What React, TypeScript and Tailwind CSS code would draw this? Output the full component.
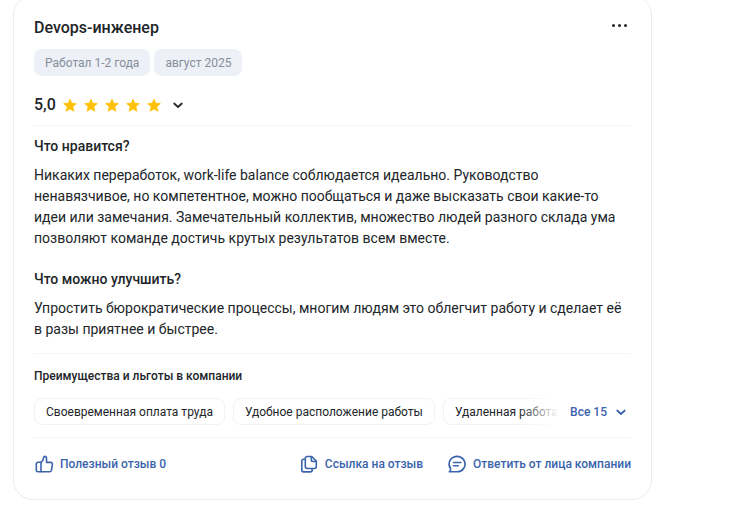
import { ReactNode } from 'react'

const ADVANTAGES = ['Своевременная оплата труда', 'Удобное расположение работы', 'Удаленная работа']

const Star = () => (
    <svg viewBox="0 0 16 16" className="size-4" fill="#ffc107">
        <path
            d="M8 2.200l1.700 4 4.600.4-3.500 3.100 1.100 4.500L8 11.900l-3.900 2.300 1.100-4.500L1.700 6.600l4.600-.4z"
            stroke="#ffc107"
            strokeWidth="0.8"
            strokeLinejoin="round"
        />
    </svg>
)

const Chevron = () => (
    <svg viewBox="0 0 16 16" className="size-4" fill="none" stroke="currentColor" strokeWidth="1.7">
        <path d="M4.200 6.500L8 10l3.800-3.500" strokeLinecap="round" strokeLinejoin="round" />
    </svg>
)

const Icon = ({ children }: { children: ReactNode }) => (
    <svg
        viewBox="0 0 20 20"
        className="size-5"
        fill="none"
        stroke="currentColor"
        strokeWidth="1.600"
        strokeLinecap="round"
        strokeLinejoin="round"
    >
        {children}
    </svg>
)

const LikeIcon = () => (
    <Icon>
        <path d="M7 8.300H4.100C3 8.300 2.300 9 2.300 10.100v6c0 1.100.6 1.700 1.700 1.700h11.500c1 0 1.700-.5 1.900-1.500l1-5.800c.2-1.300-.4-2.100-1.700-2.100h-4.200V4.300c0-1.200-.6-1.900-1.600-1.900-.7 0-1.100.4-1.300 1.100L9 6.200 7 8.300z" />
        <path d="M7 8.300v9.300" />
    </Icon>
)

const CopyIcon = () => (
    <Icon>
        <path d="M6.300 4.400c0-1.200.7-1.900 1.900-1.900h4.500l4.600 4.600v5.500c0 1.200-.7 1.900-1.900 1.900H8.200c-1.200 0-1.900-.7-1.900-1.900z" />
        <path d="M12.300 2.800v2.900c0 1.200.6 1.800 1.800 1.800H17" />
        <path d="M5.300 5.300H4.700c-1.200 0-1.900.7-1.900 1.900V16c0 1.200.7 1.900 1.900 1.900h6.600c1.200 0 1.900-.7 1.900-1.900v-.8" />
    </Icon>
)

const ReplyIcon = () => (
    <Icon>
        <path d="M3.600 14.600A8 7.700 0 1 1 10.200 17.800H2.300c.9-.8 1.400-1.900 1.300-3.200z" />
        <path d="M6.500 8.500h7.400M6.500 11.700h4.800" />
    </Icon>
)

type SectionProps = {
    title: string
    children: ReactNode
}

const Section = ({ title, children }: SectionProps) => (
    <section>
        <h3 className="text-sm leading-5 font-medium">{title}</h3>
        <p className="mt-[9px] text-sm leading-[21px]">{children}</p>
    </section>
)

type ActionProps = {
    icon: ReactNode
    label: string
}

const Action = ({ icon, label }: ActionProps) => (
    <button className="flex items-center gap-[6px] whitespace-nowrap">
        {icon}
        {label}
    </button>
)

export default function App() {
    return (
        <main className="min-h-screen bg-white pr-[87px] pl-[13px] font-['Roboto',sans-serif] text-[#212529]">
            <article className="-mt-[5px] rounded-[20px] border border-[#e9ecf5] px-5 pt-5 pb-[25px]">
                <header className="flex items-start justify-between">
                    <h2 className="text-base leading-6 font-medium">Devops-инженер</h2>
                    <button aria-label="Меню" className="flex h-[18px] items-center gap-[3px] px-1">
                        <span className="size-[3px] rounded-full bg-[#212529]" />
                        <span className="size-[3px] rounded-full bg-[#212529]" />
                        <span className="size-[3px] rounded-full bg-[#212529]" />
                    </button>
                </header>

                <div className="mt-[9px] flex gap-1 text-xs leading-[26px] text-[#868e99]">
                    <span className="rounded-lg bg-[#edf0f7] px-[11px] pt-px">Работал 1-2 года</span>
                    <span className="rounded-lg bg-[#edf0f7] px-[11px] pt-px">август 2025</span>
                </div>

                <div className="mt-[17px] flex items-center border-b border-[#f3f4f6] pb-2">
                    <span className="text-base leading-6 font-medium">5,0</span>
                    <div className="ml-[6px] flex gap-[5px]">
                        <Star />
                        <Star />
                        <Star />
                        <Star />
                        <Star />
                    </div>
                    <button aria-label="Оценки" className="ml-2">
                        <Chevron />
                    </button>
                </div>

                <div className="flex flex-col gap-5 border-b border-[#f3f4f6] pt-[10px] pb-[13px]">
                    <Section title="Что нравится?">
                        Никаких переработок, work-life balance соблюдается идеально. Руководство
                        ненавязчивое, но компетентное, можно пообщаться и даже высказать свои какие-то
                        идеи или замечания. Замечательный коллектив, множество людей разного склада ума
                        позволяют команде достичь крутых результатов всем вместе.
                    </Section>
                    <Section title="Что можно улучшить?">
                        Упростить бюрократические процессы, многим людям это облегчит работу и сделает её
                        в разы приятнее и быстрее.
                    </Section>
                </div>

                <div className="border-b border-[#f3f4f6] py-3">
                    <h4 className="text-xs leading-5 font-medium">Преимущества и льготы в компании</h4>
                    <div className="mt-3 flex items-center text-xs">
                        <div className="relative min-w-0 flex-1 overflow-hidden">
                            <ul className="flex gap-2">
                                {ADVANTAGES.map((name) => (
                                    <li
                                        key={name}
                                        className="shrink-0 rounded-lg border border-[#f0f2f5] px-[11px] pt-px leading-6 whitespace-nowrap"
                                    >
                                        {name}
                                    </li>
                                ))}
                            </ul>
                            <div className="absolute inset-y-0 right-0 w-10 bg-linear-to-r from-transparent to-white" />
                        </div>
                        <button className="ml-[11px] flex items-center gap-[6px] pr-[2px] font-medium text-[#3b64ad]">
                            Все 15
                            <Chevron />
                        </button>
                    </div>
                </div>

                <footer className="flex items-center justify-between pt-4 text-xs leading-5 font-medium text-[#3b64ad]">
                    <Action icon={<LikeIcon />} label="Полезный отзыв 0" />
                    <div className="flex gap-6">
                        <Action icon={<CopyIcon />} label="Ссылка на отзыв" />
                        <Action icon={<ReplyIcon />} label="Ответить от лица компании" />
                    </div>
                </footer>
            </article>
        </main>
    )
}
